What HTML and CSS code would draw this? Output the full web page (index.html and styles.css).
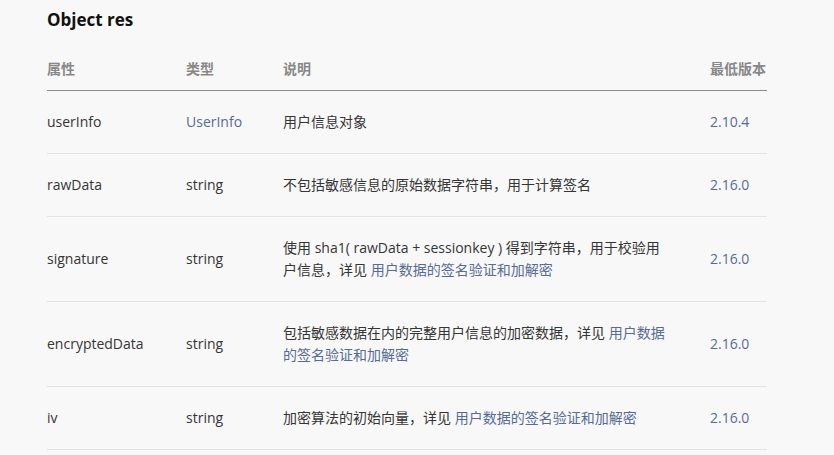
FILE: index.html
```html
<!DOCTYPE html>
<html lang="zh-CN">
<head>
<meta charset="utf-8">
<title>Object res</title>
<link rel="stylesheet" href="styles.css">
</head>
<body>
<div class="doc">
  <h3 class="title">Object res</h3>
  <table class="params">
    <colgroup>
      <col class="c-name"><col class="c-type"><col class="c-desc"><col class="c-ver">
    </colgroup>
    <thead>
      <tr><th>属性</th><th>类型</th><th>说明</th><th>最低版本</th></tr>
    </thead>
    <tbody>
      <tr><td>userInfo</td><td><a class="link">UserInfo</a></td><td class="desc">用户信息对象</td><td class="ver">2.10.4</td></tr>
      <tr><td>rawData</td><td>string</td><td class="desc">不包括敏感信息的原始数据字符串，用于计算签名</td><td class="ver">2.16.0</td></tr>
      <tr><td>signature</td><td>string</td><td class="desc">使用 sha1( rawData + sessionkey ) 得到字符串，用于校验用户信息，详见 <a class="link">用户数据的签名验证和加解密</a></td><td class="ver">2.16.0</td></tr>
      <tr><td>encryptedData</td><td>string</td><td class="desc">包括敏感数据在内的完整用户信息的加密数据，详见 <a class="link">用户数据的签名验证和加解密</a></td><td class="ver">2.16.0</td></tr>
      <tr><td>iv</td><td>string</td><td class="desc">加密算法的初始向量，详见 <a class="link">用户数据的签名验证和加解密</a></td><td class="ver">2.16.0</td></tr>
    </tbody>
  </table>
</div>
</body>
</html>
```
FILE: styles.css
```css
html, body {
  margin: 0;
  padding: 0;
  background: #f8f8f8;
}
body {
  font-family: "Open Sans", "Noto Sans CJK SC", sans-serif;
  font-size: 14px;
  color: #353535;
}
.doc {
  padding: 7px 0 0 47px;
  width: 720px;
}
.title {
  margin: 0;
  font-size: 17px;
  line-height: 26px;
  font-weight: 700;
  color: #111;
}
.params {
  margin-top: 15px;
  width: 720px;
  border-collapse: collapse;
  table-layout: fixed;
}
.c-name { width: 139px; }
.c-type { width: 97px; }
.c-desc { width: 427px; }
.c-ver { width: 57px; }
.params th {
  text-align: left;
  font-weight: 700;
  color: #888;
  line-height: 22px;
  padding: 10px 0 10px 0;
  border-bottom: 1px solid #8c8c8c;
}
.params td {
  padding: 20px 0;
  line-height: 22px;
  vertical-align: middle;
  border-bottom: 1px solid #e3e3e3;
}
.params td.desc {
  padding-right: 41px;
}
.link {
  color: #576b95;
  text-decoration: none;
}
.ver {
  color: #576b95;
}
```
